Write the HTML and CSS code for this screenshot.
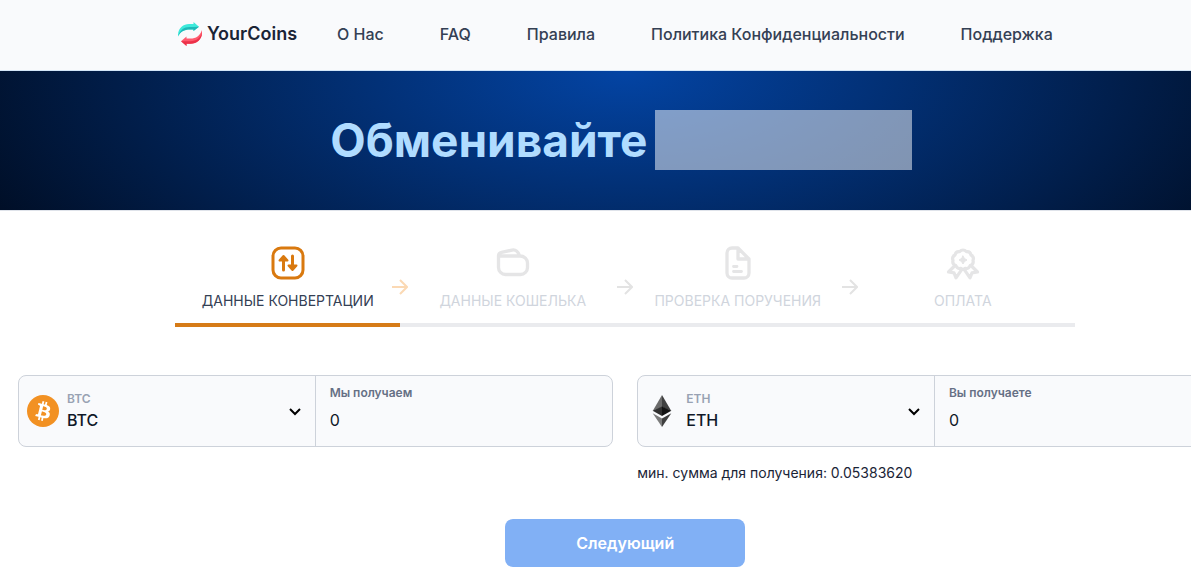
FILE: index.html
```html
<!DOCTYPE html>
<html lang="ru">
<head>
<meta charset="utf-8">
<meta name="viewport" content="width=device-width, initial-scale=1">
<title>YourCoins</title>
<link rel="stylesheet" href="styles.css">
</head>
<body>
<div class="page">
  <header class="header">
    <a class="logo" href="#">
      <svg class="logo-icon" viewBox="0 0 24 24" aria-hidden="true">
        <path fill="#3eeadb" d="M0 14.500C-.5 6.500 5 2 11 2h4.500V0L21 4.800 15.500 9V7.500H12C6 7.500 2 10 0 14.500z"/>
        <path fill="#1fb9b8" d="M0 14.500C2 8 6 5 11.500 5h4L21 4.800 15.500 9V7.500H12C6 7.500 2 10 0 14.500z"/>
        <path fill="#ff5a6e" d="M24 8c1 8-4.500 13.700-11.500 13.700H8.500V24L3 19.200 8.500 14.500V16.500h4C18 16.500 22 14 24 8z"/>
        <path fill="#ec3149" d="M24 10.500c0 7-5 11.200-11.500 11.200H8.500V24L3 19.200h9.500C18 19.200 22.500 16 24 10.500z"/>
      </svg>
      <span>YourCoins</span>
    </a>
    <nav class="nav">
      <a href="#">О Нас</a>
      <a href="#">FAQ</a>
      <a href="#">Правила</a>
      <a href="#">Политика Конфиденциальности</a>
      <a href="#">Поддержка</a>
    </nav>
  </header>

  <section class="hero">
    <h1>Обменивайте</h1>
    <span class="hero-block"></span>
  </section>

  <main class="main">
    <div class="progress">
      <ol class="steps">
        <li class="step active">
          <svg class="step-icon" viewBox="0 0 32 32" fill="none" stroke="currentColor" stroke-width="3" stroke-linecap="round" stroke-linejoin="round" aria-hidden="true">
            <rect x="1" y="1" width="30" height="30" rx="8"/>
            <path d="M11.500 23V11M20.500 9v12"/>
            <path fill="currentColor" stroke-width="2" d="M11.500 9l-4 4.500h8zM20.500 23l-4-4.500h8z"/>
          </svg>
          <span>ДАННЫЕ КОНВЕРТАЦИИ</span>
        </li>
        <li class="arrow current" aria-hidden="true"><svg viewBox="0 0 16 16"><path d="M0 8h15M8 1l7 7-7 7"/></svg></li>
        <li class="step">
          <svg class="step-icon" viewBox="0 0 32 32" fill="none" stroke="currentColor" stroke-width="3.300" stroke-linecap="round" stroke-linejoin="round" aria-hidden="true">
            <path d="M1.500 9v11.500a7 7 0 0 0 7 7h15a7 7 0 0 0 7-7V16a7 7 0 0 0-7-7h-22zM1.500 9c0-2 1-3.200 3-3.600l10.500-2.300c3.500-.700 6 1.600 7.500 5.400"/>
          </svg>
          <span>ДАННЫЕ КОШЕЛЬКА</span>
        </li>
        <li class="arrow" aria-hidden="true"><svg viewBox="0 0 16 16"><path d="M0 8h15M8 1l7 7-7 7"/></svg></li>
        <li class="step">
          <svg class="step-icon" viewBox="0 0 32 32" fill="none" stroke="currentColor" stroke-width="3.300" stroke-linecap="round" stroke-linejoin="round" aria-hidden="true">
            <path d="M16 1h-6a5 5 0 0 0-5 5v20a5 5 0 0 0 5 5h12a5 5 0 0 0 5-5V12zM16 1v11h11"/>
            <path stroke-width="2.800" d="M11.500 19.500h3.500M11.500 24.500h8"/>
          </svg>
          <span>ПРОВЕРКА ПОРУЧЕНИЯ</span>
        </li>
        <li class="arrow" aria-hidden="true"><svg viewBox="0 0 16 16"><path d="M0 8h15M8 1l7 7-7 7"/></svg></li>
        <li class="step">
          <svg class="step-icon" viewBox="0 0 32 32" fill="none" stroke="currentColor" stroke-width="3.200" stroke-linecap="round" stroke-linejoin="round" aria-hidden="true">
            <path d="M16 3q2 0 3.300 1.600 4-.6 4.700 3.400Q27.500 9.800 26 13.300q1 4-2.800 5.200-1.600 3.800-5 2.800-2.200 2-4.400 0-3.400 1-5-2.800Q5 17.300 6 13.300 4.500 9.800 8 8q.7-4 4.700-3.400Q14 3 16 3z"/>
            <path d="M7 19.500l-5.500 5.500 5.500.800 2 5 5.500-8M25 19.500l5.500 5.500-5.500.800-2 5-5.500-8"/>
            <path fill="currentColor" stroke-width="1" d="M16 9l1.500 2.500L20 13l-2.500 1.500L16 17l-1.500-2.500L12 13l2.500-1.500z"/>
          </svg>
          <span>ОПЛАТА</span>
        </li>
      </ol>
      <div class="track"><div class="track-fill"></div></div>
    </div>

    <form class="exchange">
      <div class="fields">
        <div class="group">
          <div class="coin">
            <svg class="coin-icon" viewBox="0 0 32 32" aria-hidden="true">
              <circle cx="16" cy="16" r="16" fill="#f29123"/>
              <path fill="#fff" fill-rule="evenodd" d="M23.189 14.020c.314-2.096-1.283-3.223-3.465-3.975l.708-2.840-1.728-.430-.690 2.765c-.454-.114-.920-.220-1.385-.326l.695-2.783L15.596 6l-.708 2.839c-.376-.086-.746-.170-1.104-.260l.002-.009-2.384-.595-.460 1.846s1.283.294 1.256.312c.700.175.826.638.805 1.006l-.806 3.235c.048.012.110.030.180.057l-.183-.045-1.130 4.532c-.086.212-.303.531-.793.410.018.025-1.256-.313-1.256-.313l-.858 1.978 2.250.561c.418.105.828.215 1.231.318l-.715 2.872 1.727.430.708-2.840c.472.127.930.245 1.378.357l-.706 2.828 1.728.430.715-2.866c2.948.558 5.164.333 6.097-2.333.752-2.146-.037-3.385-1.588-4.192 1.130-.260 1.980-1.003 2.207-2.538zm-3.950 5.538c-.533 2.147-4.148.986-5.320.695l.950-3.805c1.172.293 4.929.872 4.370 3.110zm.535-5.569c-.487 1.953-3.495.960-4.470.717l.860-3.450c.975.243 4.118.696 3.610 2.733z"/>
            </svg>
            <div class="coin-text">
              <label for="from">BTC</label>
              <select id="from"><option>BTC</option><option>ETH</option></select>
            </div>
          </div>
          <div class="amount">
            <label for="give">Мы получаем</label>
            <input id="give" type="text" value="0">
          </div>
        </div>
        <div class="group">
          <div class="coin">
            <svg class="coin-icon" viewBox="0 0 32 32" aria-hidden="true">
              <path fill="#6b6b6b" d="M16 0l-9.300 16L16 12z"/>
              <path fill="#414141" d="M16 0l9.300 16L16 12z"/>
              <path fill="#303030" d="M16 11.500L6.700 15.800 16 21z"/>
              <path fill="#141414" d="M16 11.500l9.300 4.300L16 21z"/>
              <path fill="#7b7b7b" d="M6.700 18.200L16 23.500V32z"/>
              <path fill="#3f3f3f" d="M25.300 18.200L16 23.500V32z"/>
            </svg>
            <div class="coin-text">
              <label for="to">ETH</label>
              <select id="to"><option>ETH</option><option>BTC</option></select>
            </div>
          </div>
          <div class="amount">
            <label for="get">Вы получаете</label>
            <input id="get" type="text" value="0">
          </div>
        </div>
        <p class="hint">мин. сумма для получения: 0.05383620</p>
      </div>
      <button class="next" type="button">Следующий</button>
    </form>
  </main>
</div>
</body>
</html>
```
FILE: styles.css
```css
*, *::before, *::after { box-sizing: border-box; }

body {
  margin: 0;
  overflow-x: hidden;
  background: #fff;
  color: #1a2436;
  font-family: Inter, "Liberation Sans", sans-serif;
  font-size: 16px;
  line-height: 24px;
}

h1, p, ol { margin: 0; padding: 0; }
a { color: inherit; text-decoration: none; }

/* The page runs slightly wider than the viewport. */
.page { width: 105%; }

.header {
  display: flex;
  align-items: center;
  gap: 40px;
  padding: 22px 0 24px 178px;
  background: #f9fafc;
  border-bottom: 1px solid #d3e6f8;
}

.logo {
  display: flex;
  align-items: center;
  gap: 5px;
  font-size: 18px;
  font-weight: 600;
}
.logo-icon { width: 24px; height: 24px; }

.nav {
  display: flex;
  gap: 56px;
  color: #344054;
  font-weight: 500;
}

.hero {
  display: flex;
  justify-content: center;
  align-items: center;
  gap: 8px;
  padding: 39px 8px 40px 0;
  background: radial-gradient(760px 340px at top, #0344a4, #000a1c);
  border-bottom: 1px solid #dfe3ea;
}
.hero h1 {
  color: #b0dcff;
  font-size: 46px;
  font-weight: 700;
  line-height: 60px;
}
.hero-block {
  width: 257px;
  height: 60px;
  background: rgba(255, 255, 255, 0.5);
}

.main { padding: 36px 18px 0; }

.progress { width: 900px; max-width: 100%; margin: 0 auto; }

.steps {
  display: flex;
  align-items: flex-end;
  padding: 0 8px 10px;
  list-style: none;
}
.step {
  flex: 1;
  display: flex;
  flex-direction: column;
  align-items: center;
  gap: 10px;
  color: #e5e5e6;
}
.step-icon { width: 32px; height: 32px; overflow: visible; }
.step span {
  color: #d0d5dd;
  font-size: 14px;
  line-height: 24px;
  white-space: nowrap;
}
.step.active { color: #d9790f; }
.step.active span { color: #344054; }

.arrow { width: 16px; height: 34px; color: #e3e3e3; }
.arrow svg {
  display: block;
  width: 16px;
  height: 16px;
  fill: none;
  stroke: currentColor;
  stroke-width: 2;
}
.arrow.current { color: #fbd9b4; }

.track { height: 4px; background: #eaebee; }
.track-fill { width: 25%; height: 100%; background: #d67b17; }

.exchange {
  display: flex;
  flex-direction: column;
  align-items: center;
  gap: 34px;
  margin-top: 48px;
}
.fields {
  display: grid;
  grid-template-columns: 1fr 1fr;
  gap: 14px 24px;
  width: 100%;
}
.group {
  display: grid;
  grid-template-columns: 1fr 1fr;
  height: 72px;
  background: #f9fafc;
  border: 1px solid #cdd2da;
  border-radius: 8px;
  overflow: hidden;
}
.coin {
  display: flex;
  align-items: center;
  gap: 8px;
  padding: 0 8px;
  border-right: 1px solid #cdd2da;
}
.coin-icon { width: 32px; height: 32px; flex: none; }
.coin-text { flex: 1; display: flex; flex-direction: column; }
.coin-text label {
  color: #98a2b3;
  font-size: 12px;
  font-weight: 600;
  line-height: 18px;
}

select, input {
  width: 100%;
  height: 24px;
  padding: 0;
  border: 0;
  outline: 0;
  appearance: none;
  background: transparent;
  color: #101828;
  font: inherit;
}
select {
  font-weight: 500;
  background: url("data:image/svg+xml,%3Csvg xmlns='http://www.w3.org/2000/svg' viewBox='0 0 12 8'%3E%3Cpath d='M1 1l5 5 5-5' fill='none' stroke='black' stroke-width='2'/%3E%3C/svg%3E") no-repeat right 6px top 0 / 12px 8px;
}

.amount {
  display: flex;
  flex-direction: column;
  gap: 6px;
  padding: 8px 14px;
}
.amount label {
  color: #667085;
  font-size: 12px;
  font-weight: 600;
  line-height: 18px;
}

.hint {
  grid-column: 2;
  font-size: 14px;
  line-height: 24px;
}

.next {
  width: 240px;
  height: 48px;
  border: 0;
  border-radius: 8px;
  background: #81b0f5;
  color: #fff;
  font: inherit;
  font-weight: 600;
}
```
